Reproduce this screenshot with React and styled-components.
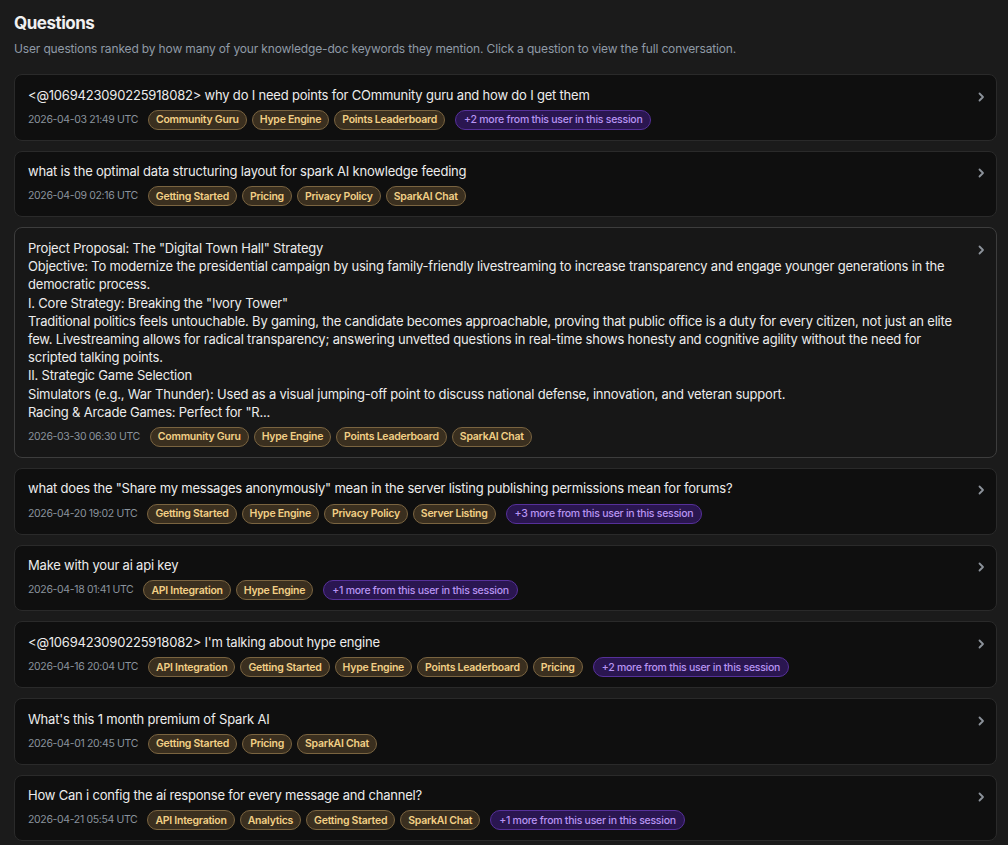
import React from 'react';
import styled, { createGlobalStyle } from 'styled-components';

const GlobalStyle = createGlobalStyle`
  * { box-sizing: border-box; }
  html, body {
    margin: 0;
    padding: 0;
    background: #1b1b1b;
  }
  body {
    font-family: Inter, "Noto Sans", "Liberation Sans", sans-serif;
    color: #e8e8e8;
  }
`;

const questions = [
  {
    text: '<@1069423090225918082> why do I need points for COmmunity guru and how do I get them',
    time: '2026-04-03 21:49 UTC',
    tags: ['Community Guru', 'Hype Engine', 'Points Leaderboard'],
    more: 2,
  },
  {
    text: 'what is the optimal data structuring layout for spark AI knowledge feeding',
    time: '2026-04-09 02:16 UTC',
    tags: ['Getting Started', 'Pricing', 'Privacy Policy', 'SparkAI Chat'],
  },
  {
    text: `Project Proposal: The "Digital Town Hall" Strategy
Objective: To modernize the presidential campaign by using family-friendly livestreaming to increase transparency and engage younger generations in the democratic process.
I. Core Strategy: Breaking the "Ivory Tower"
Traditional politics feels untouchable. By gaming, the candidate becomes approachable, proving that public office is a duty for every citizen, not just an elite few. Livestreaming allows for radical transparency; answering unvetted questions in real-time shows honesty and cognitive agility without the need for scripted talking points.
II. Strategic Game Selection
Simulators (e.g., War Thunder): Used as a visual jumping-off point to discuss national defense, innovation, and veteran support.
Racing & Arcade Games: Perfect for "R...`,
    time: '2026-03-30 06:30 UTC',
    tags: ['Community Guru', 'Hype Engine', 'Points Leaderboard', 'SparkAI Chat'],
    active: true,
  },
  {
    text: 'what does the "Share my messages anonymously" mean in the server listing publishing permissions mean for forums?',
    time: '2026-04-20 19:02 UTC',
    tags: ['Getting Started', 'Hype Engine', 'Privacy Policy', 'Server Listing'],
    more: 3,
  },
  {
    text: 'Make with your ai api key',
    time: '2026-04-18 01:41 UTC',
    tags: ['API Integration', 'Hype Engine'],
    more: 1,
  },
  {
    text: "<@1069423090225918082> I'm talking about hype engine",
    time: '2026-04-16 20:04 UTC',
    tags: ['API Integration', 'Getting Started', 'Hype Engine', 'Points Leaderboard', 'Pricing'],
    more: 2,
  },
  {
    text: "What's this 1 month premium of Spark AI",
    time: '2026-04-01 20:45 UTC',
    tags: ['Getting Started', 'Pricing', 'SparkAI Chat'],
  },
  {
    text: 'How Can i config the aí response for every message and channel?',
    time: '2026-04-21 05:54 UTC',
    tags: ['API Integration', 'Analytics', 'Getting Started', 'SparkAI Chat'],
    more: 1,
  },
];

const Chevron = () => (
  <svg width="16" height="16" viewBox="0 0 16 16" fill="none" stroke="currentColor" strokeWidth="1.8" strokeLinecap="round" strokeLinejoin="round">
    <path d="M6.5 4.5 10 8l-3.5 3.5" />
  </svg>
);

const QuestionCard = ({ text, time, tags, more, active }) => {
  return (
    <Card active={active}>
      <Body>
        <QuestionText>{text}</QuestionText>
        <Meta>
          <Time>{time}</Time>
          {tags.map((t) => (
            <Tag key={t}>{t}</Tag>
          ))}
          {more ? <MoreTag>+{more} more from this user in this session</MoreTag> : null}
        </Meta>
      </Body>
      <Arrow>
        <Chevron />
      </Arrow>
    </Card>
  );
};

const App = () => {
  return (
    <Page>
      <GlobalStyle />
      <Title>Questions</Title>
      <Subtitle>
        User questions ranked by how many of your knowledge-doc keywords they mention. Click a question to view the full conversation.
      </Subtitle>
      <List>
        {questions.map((q, i) => (
          <QuestionCard key={i} {...q} />
        ))}
      </List>
    </Page>
  );
};

export default App;

const Page = styled.div`
  padding: 12px 11px 0 14px;
`;

const Title = styled.h1`
  margin: 0;
  font-size: 17px;
  font-weight: 700;
  line-height: 22px;
  letter-spacing: -0.5px;
  color: #f0f0f0;
`;

const Subtitle = styled.p`
  margin: 6px 0 0;
  font-size: 12px;
  line-height: 18px;
  letter-spacing: -0.15px;
  color: #8f9aa6;
`;

const List = styled.div`
  display: flex;
  flex-direction: column;
  gap: 10px;
  margin-top: 16px;
`;

const Card = styled.div.withConfig({ shouldForwardProp: (p) => p !== 'active' })`
  display: flex;
  align-items: flex-start;
  gap: 12px;
  padding: 10.5px 7px 10px 13px;
  background: ${(p) => (p.active ? '#171717' : '#0f0f0f')};
  border: 1px solid ${(p) => (p.active ? '#3d3d3d' : '#2a2a2a')};
  border-radius: 8px;
  cursor: pointer;
`;

const Body = styled.div`
  flex: 1;
  min-width: 0;
`;

const QuestionText = styled.div`
  font-size: 13px;
  line-height: 18.2px;
  letter-spacing: -0.2px;
  color: #ececec;
  white-space: pre-wrap;
`;

const Meta = styled.div`
  display: flex;
  align-items: center;
  flex-wrap: wrap;
  gap: 5px;
  margin-top: 6px;
`;

const Time = styled.span`
  font-size: 10.5px;
  line-height: 14px;
  letter-spacing: -0.35px;
  color: #8a939d;
  margin-right: 5px;
`;

const Tag = styled.span`
  display: inline-flex;
  align-items: center;
  height: 20px;
  padding: 0 7px;
  font-size: 10.5px;
  font-weight: 600;
  letter-spacing: -0.25px;
  color: #f2cf86;
  background: #3a2f1f;
  border: 1px solid #7a6440;
  border-radius: 999px;
`;

const MoreTag = styled(Tag)`
  margin-left: 5px;
  padding: 0 8px;
  color: #b894f2;
  background: #2a1650;
  border-color: #56309a;
  font-weight: 500;
`;

const Arrow = styled.div`
  display: flex;
  align-items: center;
  margin-top: 3px;
  color: #8c929a;
`;
